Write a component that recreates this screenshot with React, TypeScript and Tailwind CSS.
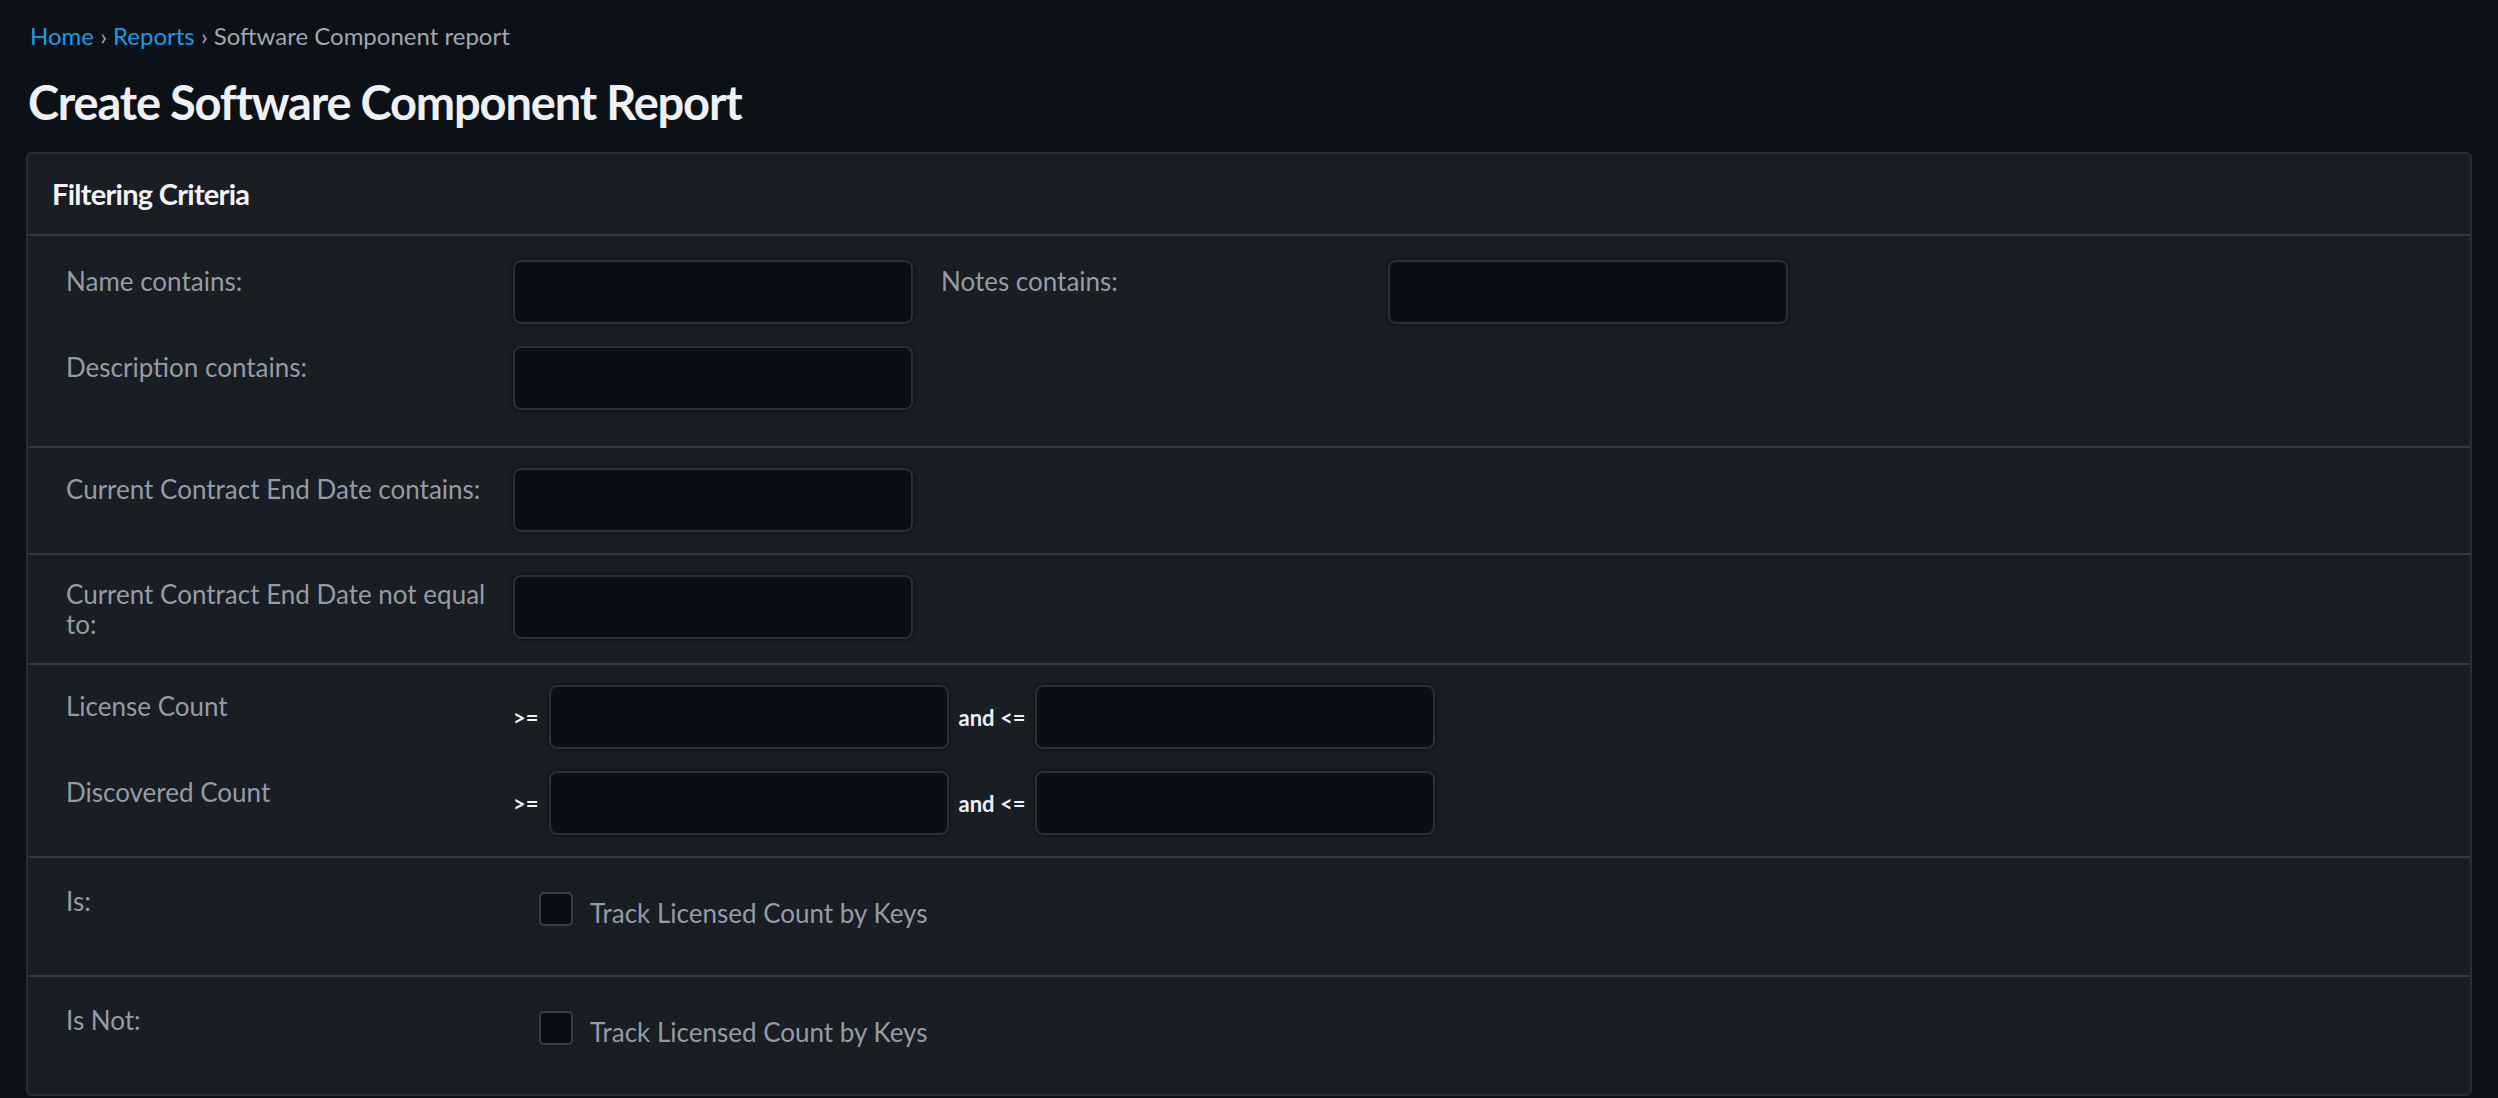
import React from 'react';

const font = { fontFamily: 'Lato, "Noto Sans", sans-serif' };

function TextInput({ className = '' }: { className?: string }) {
  return (
    <input
      type="text"
      className={`h-[64px] rounded-[8px] border-2 border-[#2a2f38] bg-[#0b0e15] shadow-[0_0_4px_rgba(0,0,0,0.6)] outline-none ${className}`}
    />
  );
}

function Label({ children }: { children: React.ReactNode }) {
  return <div className="w-[447px] shrink-0 pr-3 text-[26px] leading-[30px] text-[#959ca6]">{children}</div>;
}

function CheckRow({ label }: { label: string }) {
  return (
    <div className="flex border-t-2 border-[#343942] pl-[38px] pt-[28px] h-[119px]">
      <Label>{label}</Label>
      <label className="flex items-center gap-[17px] ml-[26px] mt-[6px] h-[34px]">
        <span className="w-[34px] h-[34px] rounded-[5px] border-2 border-[#3a3f47] bg-[#0b0e15]" />
        <span className="text-[26px] text-[#959ca6] mt-[8px]">Track Licensed Count by Keys</span>
      </label>
    </div>
  );
}

export default function App() {
  return (
    <div className="min-h-screen bg-[#0c1017] px-[26px] pt-[18px]" style={font}>
      {/* Breadcrumb */}
      <div className="text-[24px] leading-[36px] pl-[4px] text-[#a0a7b0]">
        <span className="text-[#1a9be6]">Home</span> › <span className="text-[#1a9be6]">Reports</span> › Software Component report
      </div>
      <h1 className="text-[47px] font-bold leading-[56px] tracking-tight text-[#eef0f3] mt-[20px] mb-[22px] pl-[2px]">
        Create Software Component Report
      </h1>

      <div className="rounded-[6px] border-2 border-[#2a2f37] bg-[#191d24]">
        <div className="h-[80px] flex items-center pl-[24px] text-[29px] font-bold tracking-tight text-[#f1f3f5]">
          Filtering Criteria
        </div>

        {/* Name / Description / Notes */}
        <div className="border-t-2 border-[#343942] pl-[38px] pt-[24px] pb-[36px] flex">
          <div className="flex flex-col gap-[22px]">
            <div className="flex">
              <div className="pt-[6px]"><Label>Name contains:</Label></div>
              <TextInput className="w-[400px]" />
            </div>
            <div className="flex">
              <div className="pt-[6px]"><Label>Description contains:</Label></div>
              <TextInput className="w-[400px]" />
            </div>
          </div>
          <div className="flex ml-[28px]">
            <div className="w-[447px] pt-[6px] text-[26px] leading-[30px] text-[#959ca6]">Notes contains:</div>
            <TextInput className="w-[400px]" />
          </div>
        </div>

        <div className="border-t-2 border-[#343942] pl-[38px] pt-[20px] h-[107px] flex">
          <div className="pt-[6px]"><Label>Current Contract End Date contains:</Label></div>
          <TextInput className="w-[400px]" />
        </div>

        <div className="border-t-2 border-[#343942] pl-[38px] pt-[20px] h-[110px] flex">
          <div className="pt-[4px]"><Label>Current Contract End Date not equal to:</Label></div>
          <TextInput className="w-[400px]" />
        </div>

        {/* Ranges */}
        <div className="border-t-2 border-[#343942] pl-[38px] pt-[20px] h-[193px] flex flex-col gap-[22px]">
          {['License Count', 'Discovered Count'].map((l) => (
            <div key={l} className="flex">
              <div className="pt-[6px]"><Label>{l}</Label></div>
              <div className="flex items-center gap-[10px] text-[22px] font-bold text-[#eef0f3]">
                <span>&gt;=</span>
                <TextInput className="w-[400px]" />
                <span>and &lt;=</span>
                <TextInput className="w-[400px]" />
              </div>
            </div>
          ))}
        </div>

        <CheckRow label="Is:" />
        <CheckRow label="Is Not:" />
      </div>
    </div>
  );
}
